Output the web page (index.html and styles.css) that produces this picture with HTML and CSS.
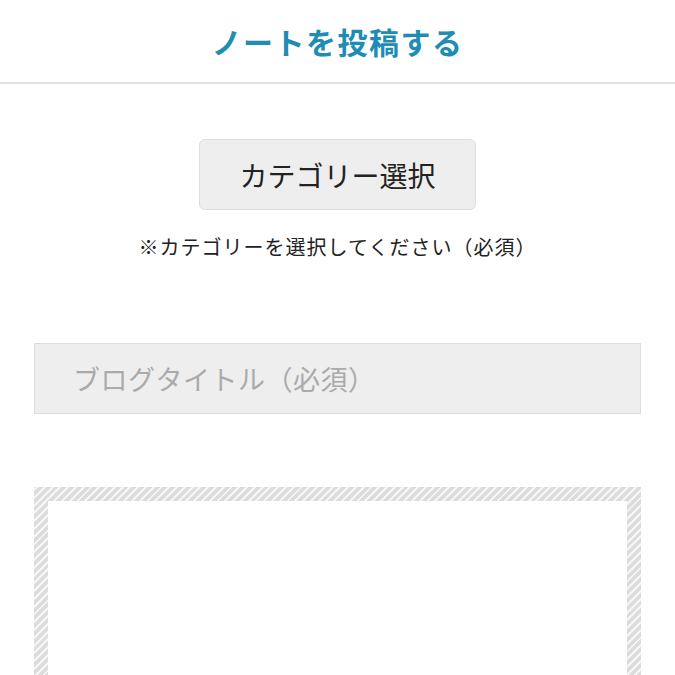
FILE: index.html
```html
<!DOCTYPE html>
<html lang="ja">
<head>
  <meta charset="UTF-8">
  <title>ノートを投稿する</title>
  <link rel="stylesheet" href="styles.css">
</head>
<body>

  <header class="page-header">
    <h1 class="page-title">ノートを投稿する</h1>
  </header>

  <main class="post-form">
    <div class="category">
      <button type="button" class="category-btn">カテゴリー選択</button>
      <p class="category-note">※カテゴリーを選択してください（必須）</p>
    </div>

    <input type="text" class="title-input" placeholder="ブログタイトル（必須）">

    <!-- 本文エリア -->
    <div class="body-frame">
      <div class="body-inner"></div>
    </div>
  </main>

</body>
</html>
```

FILE: styles.css
```css
body {
  margin: 0;
  font-family: "Noto Sans CJK JP", "Noto Sans", sans-serif;
  color: #222;
  background: #fff;
}
.page-header {
  height: 82px;
  border-bottom: 2px solid #e2e2e2;
  display: flex;
  align-items: center;
  justify-content: center;
}
.page-title {
  margin: 0;
  font-size: 30px;
  font-weight: bold;
  color: #1f8db3;
  letter-spacing: 1.5px;
}
.post-form {
  padding: 0 34px;
}
.category {
  display: flex;
  flex-direction: column;
  align-items: center;
  padding-top: 55px;
}
.category-btn {
  width: 277px;
  height: 71px;
  font-family: inherit;
  font-size: 28px;
  color: #222;
  background: #eee;
  border: 1px solid #ddd;
  border-radius: 6px;
}
.category-note {
  margin: 22px 0 0;
  font-size: 20px;
  line-height: 30px;
  letter-spacing: 1px;
}
.title-input {
  display: block;
  width: 100%;
  height: 71px;
  box-sizing: border-box;
  margin-top: 81px;
  padding: 0 38px;
  font-family: inherit;
  font-size: 27px;
  letter-spacing: 0.5px;
  background: #eee;
  border: 1px solid #ddd;
  outline: none;
}
.title-input::placeholder {
  color: #aaa;
}
.body-frame {
  margin-top: 73px;
  padding: 14px;
  height: 300px;
  background: repeating-linear-gradient(-45deg, #dcdcdc 0, #dcdcdc 3.5px, #f6f6f6 3.5px, #f6f6f6 5.5px);
}
.body-inner {
  height: 100%;
  background: #fff;
}
```
